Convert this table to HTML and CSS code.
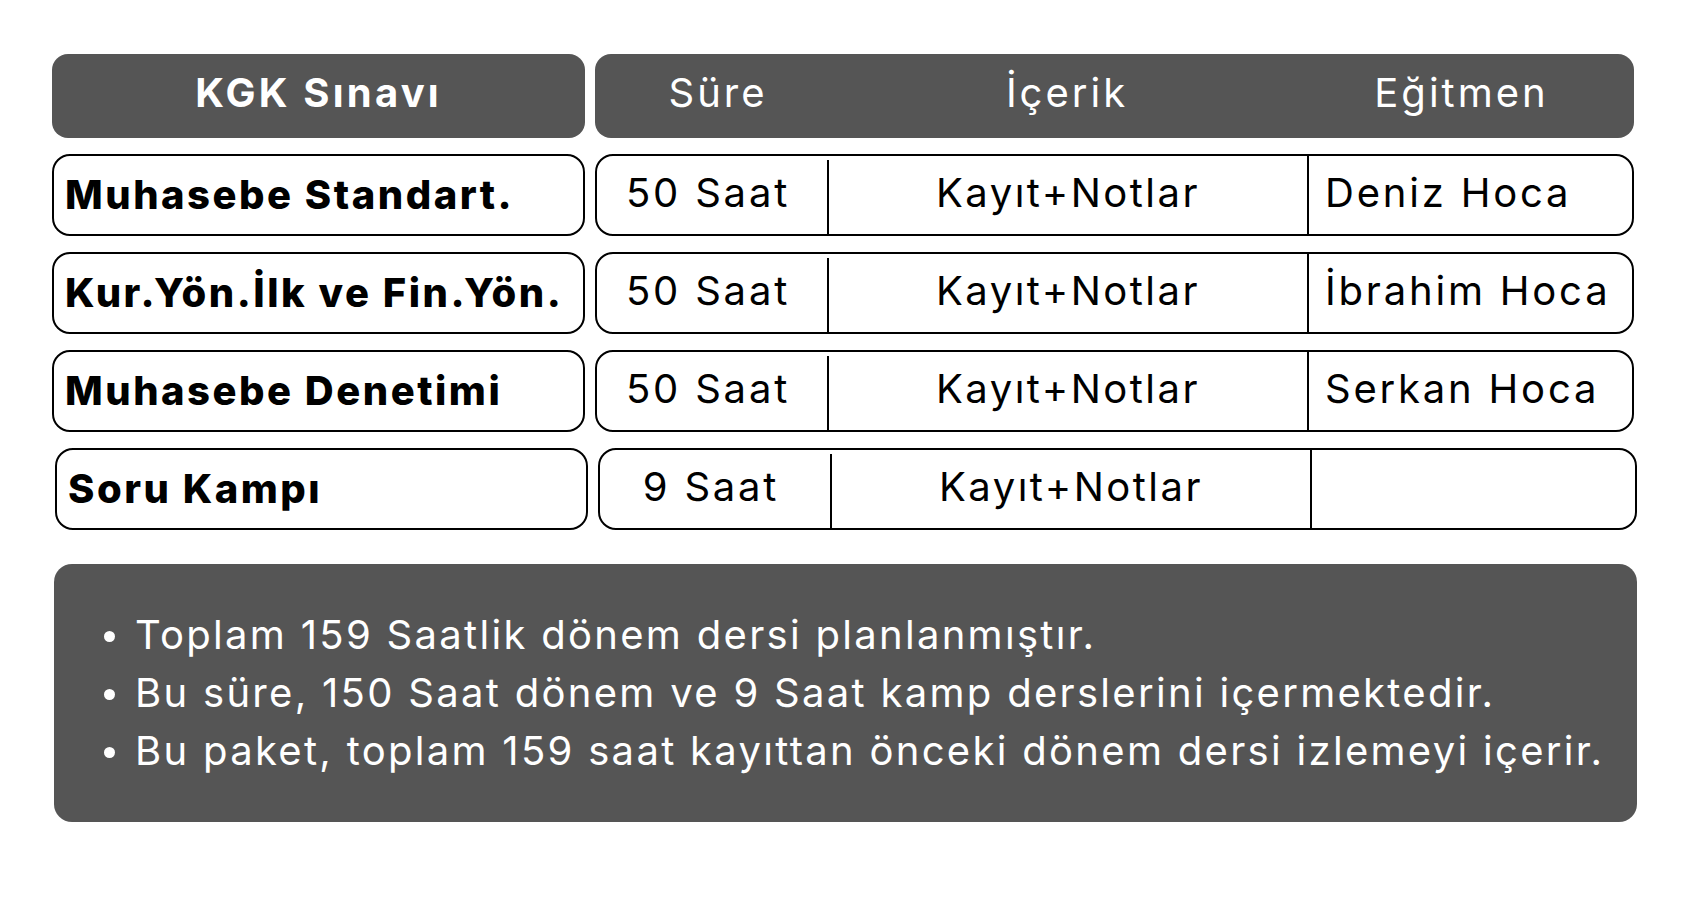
FILE: index.html
```html
<!DOCTYPE html>
<html lang="tr">
<head>
<meta charset="utf-8">
<title>KGK Sınavı</title>
<link rel="stylesheet" href="styles.css">
</head>
<body>
<main class="page">
  <section class="table">
    <div class="head head-title">KGK Sınavı</div>
    <div class="head head-cols">
      <span>Süre</span>
      <span>İçerik</span>
      <span>Eğitmen</span>
    </div>

    <div class="cell name">Muhasebe Standart.</div>
    <div class="cell info">
      <span class="c1">50 Saat</span>
      <span class="c2">Kayıt+Notlar</span>
      <span class="c3">Deniz Hoca</span>
    </div>

    <div class="cell name">Kur.Yön.İlk ve Fin.Yön.</div>
    <div class="cell info">
      <span class="c1">50 Saat</span>
      <span class="c2">Kayıt+Notlar</span>
      <span class="c3">İbrahim Hoca</span>
    </div>

    <div class="cell name">Muhasebe Denetimi</div>
    <div class="cell info">
      <span class="c1">50 Saat</span>
      <span class="c2">Kayıt+Notlar</span>
      <span class="c3">Serkan Hoca</span>
    </div>

    <div class="cell name shift">Soru Kampı</div>
    <div class="cell info shift">
      <span class="c1">9 Saat</span>
      <span class="c2">Kayıt+Notlar</span>
      <span class="c3"></span>
    </div>
  </section>

  <section class="notes">
    <ul>
      <li>Toplam 159 Saatlik dönem dersi planlanmıştır.</li>
      <li>Bu süre, 150 Saat dönem ve 9 Saat kamp derslerini içermektedir.</li>
      <li>Bu paket, toplam 159 saat kayıttan önceki dönem dersi izlemeyi içerir.</li>
    </ul>
  </section>
</main>
</body>
</html>
```

FILE: styles.css
```css
* { box-sizing: border-box; }

html, body {
  margin: 0;
  padding: 0;
  background: #ffffff;
}

body {
  width: 1700px;
  height: 900px;
  overflow: hidden;
  font-family: "Inter", "Liberation Sans", sans-serif;
  color: #000;
}

.page {
  padding: 54px 0 0 52px;
}

.table {
  display: grid;
  grid-template-columns: 533px 1039px;
  grid-template-rows: 84px;
  grid-auto-rows: 82.5px;
  column-gap: 10px;
  row-gap: 15.5px;
  white-space: nowrap;
}

.head {
  background: #555555;
  border-radius: 16px;
  color: #ffffff;
  font-size: 40px;
  padding-bottom: 8px;
}

.head-title {
  display: flex;
  align-items: center;
  justify-content: center;
  font-weight: 700;
  letter-spacing: 3.2px;
}

.head-cols {
  display: grid;
  grid-template-columns: 232px 480px 1fr;
  align-items: center;
  text-align: center;
  font-weight: 400;
  letter-spacing: 3px;
}

.head-cols span:first-child {
  padding-left: 14px;
}

.head-cols span:last-child {
  padding-right: 18px;
}

.cell {
  border: 2.5px solid #000;
  border-radius: 18px;
  background: #fff;
}

.name {
  display: flex;
  align-items: center;
  padding-left: 11px;
  font-size: 40px;
  font-weight: 800;
  letter-spacing: 2.5px;
}

.info {
  display: grid;
  grid-template-columns: 230px 480px 1fr;
  font-size: 40px;
  font-weight: 400;
  letter-spacing: 2.5px;
}

.info span {
  display: flex;
  align-items: center;
}

.c1 {
  justify-content: center;
  padding-right: 8px;
  padding-bottom: 5px;
  letter-spacing: 2.8px;
}

.c2 {
  justify-content: center;
  border-left: 2.5px solid #000;
  margin-top: 4px;
  padding-bottom: 9px;
}

.c3 {
  justify-content: flex-start;
  border-left: 2.5px solid #000;
  padding-left: 16px;
  padding-bottom: 5px;
  letter-spacing: 2.8px;
}

.shift {
  margin-left: 3px;
  margin-right: -3px;
}

.notes {
  margin-top: 33.5px;
  width: 1583px;
  height: 258px;
  margin-left: 2px;
  background: #555555;
  border-radius: 18px;
  color: #ffffff;
  padding: 42px 0 0 50px;
}

.notes ul {
  list-style: none;
  margin: 0;
  padding: 0;
}

.notes li {
  display: flex;
  align-items: center;
  font-size: 40px;
  line-height: 58px;
  letter-spacing: 2.3px;
}

.notes li::before {
  content: "";
  flex: none;
  width: 11px;
  height: 11px;
  border-radius: 50%;
  background: #ffffff;
  margin-right: 20px;
  margin-top: 4px;
}
```
